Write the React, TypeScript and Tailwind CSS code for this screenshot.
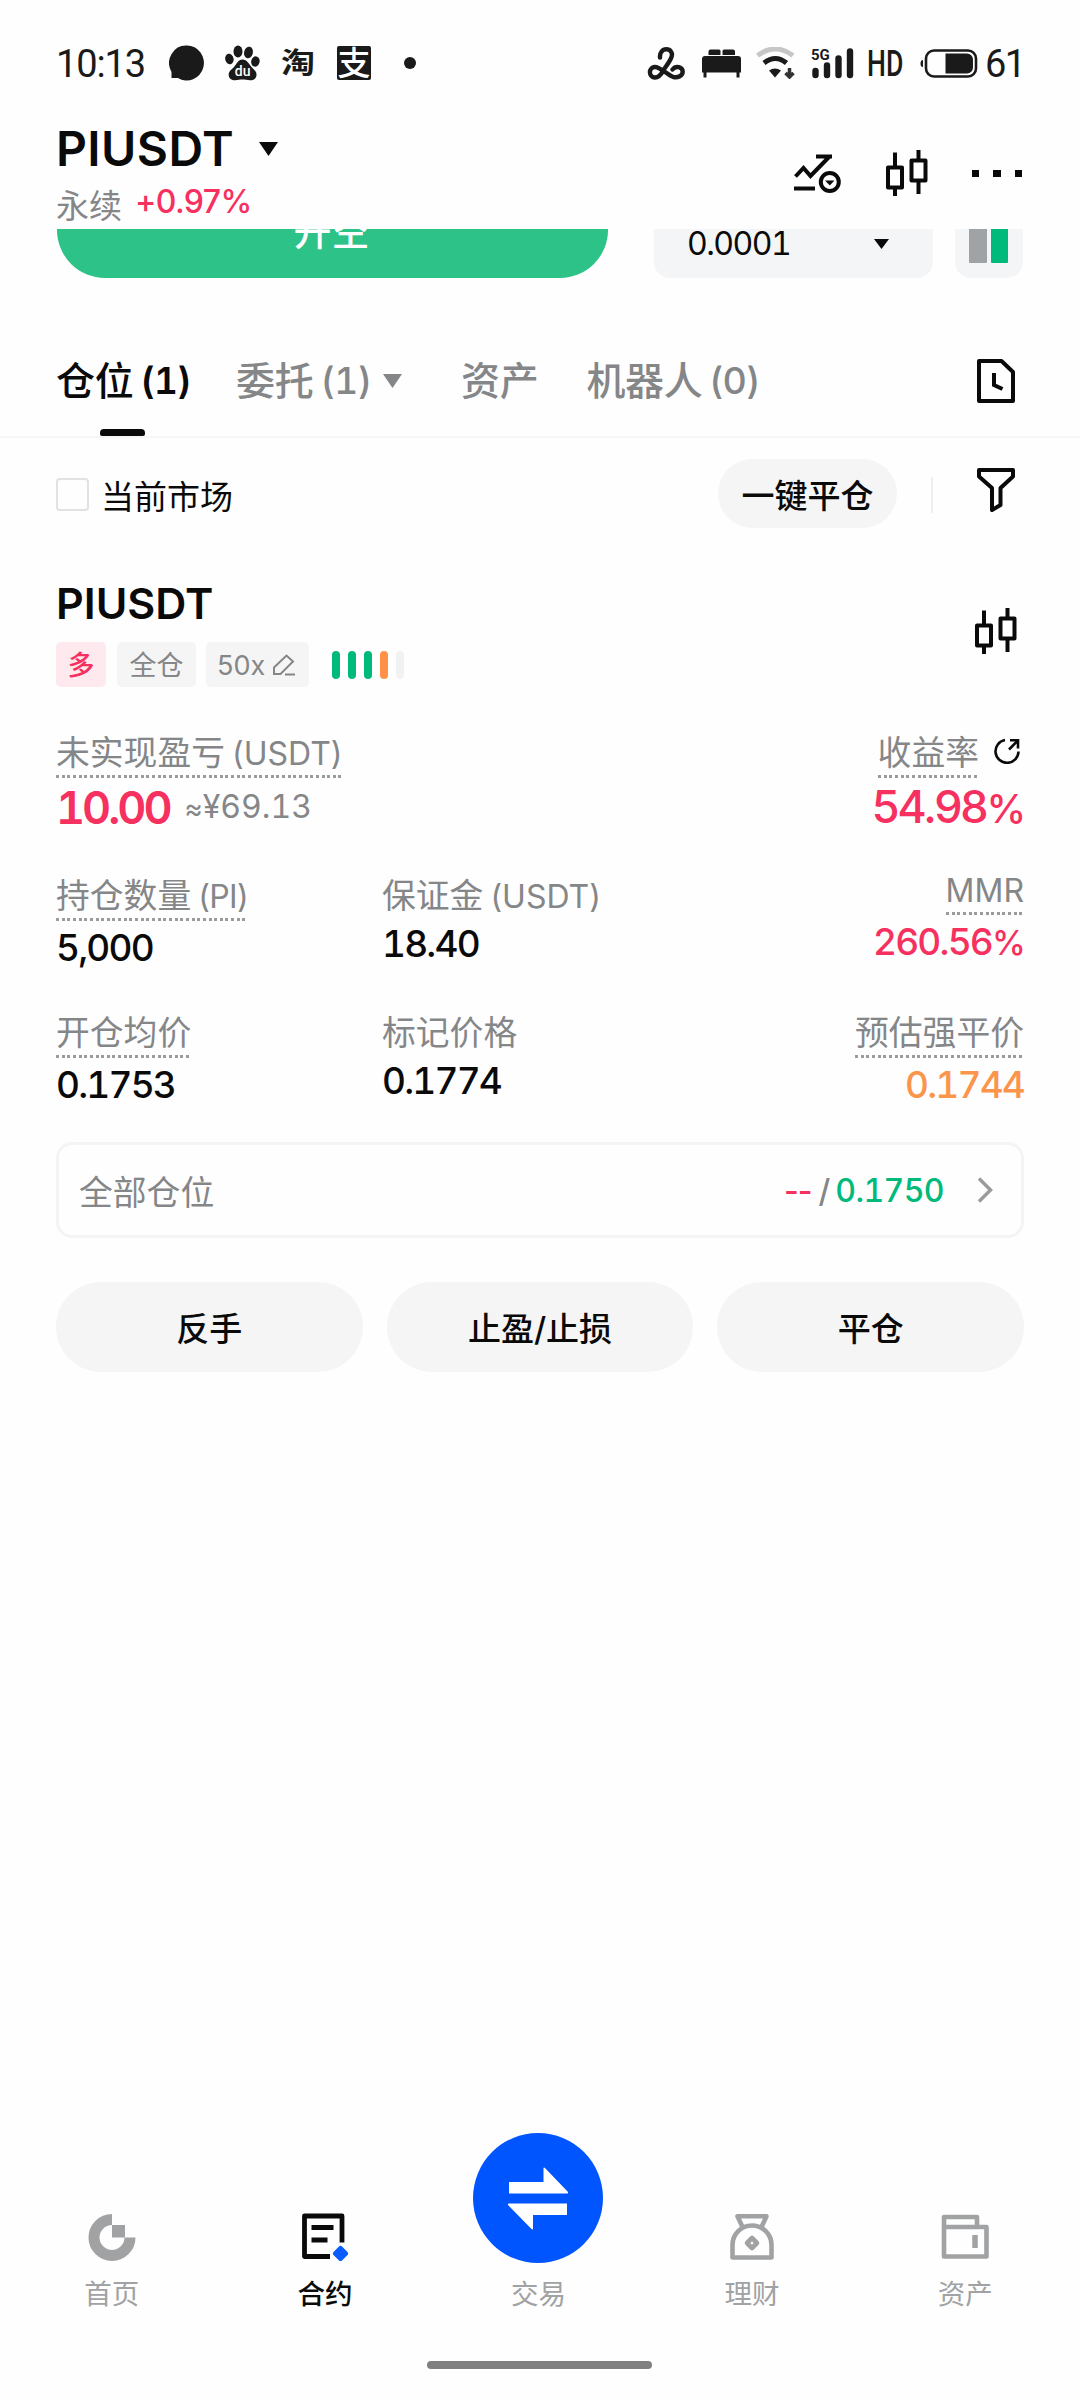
import type { ReactNode } from 'react';

function Caret({ className }: { className: string }) {
  return (
    <svg viewBox="0 0 19 14" preserveAspectRatio="none" className={className} fill="currentColor">
      <path d="M0 0H19L9.5 14Z" />
    </svg>
  );
}

function CandleIcon() {
  return (
    <svg width="42" height="46" viewBox="0 0 42 46" fill="none" stroke="#0a0a0a" strokeWidth="4" strokeLinejoin="round">
      <rect x="2" y="17.5" width="14" height="20" />
      <path d="M9 2.5V17M9 38v8" />
      <rect x="25.5" y="10.5" width="14" height="20" />
      <path d="M32.5 0V10M32.5 31v13" />
    </svg>
  );
}

function StatusBar() {
  return (
    <div className="flex h-[126px] items-center pl-[56px] pr-[58px] text-[#1a1a1a]">
      <span className="mt-[2px] w-[113px] font-[Roboto] text-[38px] leading-none tracking-[-1.1px]">10:13</span>
      <svg width="35" height="36" viewBox="0 0 35 36" fill="#1a1a1a">
        <path d="M18 0.5a17 17.5 0 1 1-9 32.4H2.5v-6A17 17.5 0 0 1 18 .5z" />
      </svg>
      <svg width="35" height="36" viewBox="0 0 35 36" fill="#1a1a1a" className="ml-[21px]">
        <ellipse cx="4.4" cy="14" rx="4.2" ry="5.4" transform="rotate(-12 4.4 14)" />
        <ellipse cx="13" cy="6.5" rx="4.5" ry="6" />
        <ellipse cx="23.5" cy="7.5" rx="4.4" ry="5.8" transform="rotate(14 23.5 7.5)" />
        <ellipse cx="30.4" cy="16.5" rx="4.2" ry="5.2" transform="rotate(12 30.4 16.5)" />
        <path d="M17.5 14.5c4.5 0 6.5 4.5 9 7.5 3 3.2 5.3 4.7 5 8.2-.4 4-3.5 5-6.5 5-3 0-5-.7-7.5-.7s-4.5.7-7.5.7c-3.5 0-6-1.5-6.3-5-.3-3.8 2.5-5.3 5.3-8.2 2.8-3 4-7.5 8.5-7.5z" />
        <text x="17.6" y="31" textAnchor="middle" fill="#fff" fontFamily="Roboto" fontSize="14" fontWeight="500">du</text>
      </svg>
      <span className="ml-[21px] w-[35px] text-[34px] font-bold leading-none [transform:scaleY(0.84)]">淘</span>
      <span className="ml-[21px] flex h-[34px] w-[34px] items-center justify-center rounded-[2px] bg-[#1a1a1a] text-[33px] font-medium leading-none text-white">支</span>
      <span className="ml-[33px] h-3 w-3 rounded-full bg-[#1a1a1a]" />

      <div className="ml-auto flex items-center">
        <svg width="38" height="33" viewBox="0 0 38 33" fill="none" stroke="#1a1a1a" strokeWidth="4.4" strokeLinecap="round">
          <path d="M13 10.5C12.5 5.5 15.5 2.3 19.3 2.3C23.5 2.3 26 6 24.5 10C23 14.5 19.5 18.5 16.5 23C14 28 11 30.7 7.5 30.5A5.3 5.3 0 0 1 7.5 20C13 19.5 20 27.5 26 29.8C31 31.3 35.7 28.5 35.7 24.8C35.7 20 29 18 25.5 22.5" />
        </svg>
        <svg width="39" height="29" viewBox="0 0 39 29" fill="#1a1a1a" className="ml-[17px]">
          <path d="M6.5 6V2.5A2 2 0 0 1 8.5.5H17A1.5 1.5 0 0 1 18.5 2V6zM20.5 6V2A1.5 1.5 0 0 1 22 .5H31A2 2 0 0 1 33 2.5V6z" />
          <path d="M3 7H36A3 3 0 0 1 39 10V23.5H0V10A3 3 0 0 1 3 7zM1.5 23h3v5.5h-3zM34.5 23h3v5.5h-3z" />
        </svg>
        <svg width="39" height="32" viewBox="0 0 39 32" fill="none" className="ml-[15px]">
          <path d="M1.5 8.5Q19.5-4.5 37 8.5" stroke="#c6c6c6" strokeWidth="5" />
          <path d="M8 16Q19.5 7 30.5 16" stroke="#1a1a1a" strokeWidth="5" />
          <path d="M13 23.5Q19 19.5 25 23.5L19 30.5Z" fill="#1a1a1a" />
          <path d="M33.5 21v9M29.5 26l4 4 4-4" stroke="#333" strokeWidth="3.5" />
        </svg>
        <svg width="41" height="31" viewBox="0 0 41 31" stroke="#1a1a1a" strokeWidth="6.4" strokeLinecap="round" className="ml-[17px] overflow-visible">
          <text x="-1" y="11.5" fontFamily="Roboto" fontSize="15" fontWeight="700" stroke="none" fill="#1a1a1a">5G</text>
          <path d="M3.5 23v4M15 17.5V27M26.5 10.5V27M38 3.5V27" />
        </svg>
        <span className="ml-[14px] mt-[2px] flex w-[37px] origin-left font-[Roboto] text-[36px] font-medium leading-none [transform:scaleX(0.74)]">HD</span>
        <svg width="58" height="29" viewBox="0 0 58 29" fill="none" className="ml-[16px]">
          <path d="M3 11Q.5 11 .5 14.5T3 18Z" fill="#1a1a1a" />
          <rect x="6" y="1.5" width="50" height="26" rx="8" stroke="#1a1a1a" strokeWidth="2.6" />
          <path d="M25.5 4.5H47a6 6 0 0 1 6 6v8a6 6 0 0 1-6 6H25.5z" fill="#1a1a1a" />
        </svg>
        <span className="ml-[7px] mt-[2px] w-[37px] font-[Roboto] text-[38px] leading-none tracking-[-1.5px]">61</span>
      </div>
    </div>
  );
}

function Header() {
  return (
    <div className="flex h-[103px] justify-between pl-[56px] pr-[58px]">
      <div>
        <div className="mt-[-3px] flex h-[52px] items-center">
          <span className="text-[48px] font-semibold leading-[52px] tracking-[0.4px]">PIUSDT</span>
          <Caret className="ml-[25px] h-[14px] w-[19px]" />
        </div>
        <div className="mt-[7px] flex h-[40px] items-center leading-[40px]">
          <span className="mt-[8px] text-[33px] text-[#858688]">永续</span>
          <span className="ml-[13px] text-[32px] font-medium tracking-[-0.6px] text-[#f6305f]">+0.97%</span>
        </div>
      </div>
      <div className="flex h-[94px] items-center">
        <svg width="47" height="39" viewBox="0 0 47 39" fill="none" stroke="#0a0a0a" strokeWidth="4">
          <path d="M1.5 22.5L9.5 14L16.5 22L35.5 2.5M22 2.5H38M0 34.5H21" />
          <circle cx="35.8" cy="28" r="9" />
          <path d="M31 26.5h9.5l-4.7 5z" fill="#0a0a0a" stroke="none" />
        </svg>
        <div className="ml-[45px]"><CandleIcon /></div>
        <div className="ml-[44px] flex gap-[14px]">
          <i className="h-[7px] w-[7.5px] bg-[#0a0a0a]" />
          <i className="h-[7px] w-[7.5px] bg-[#0a0a0a]" />
          <i className="h-[7px] w-[7.5px] bg-[#0a0a0a]" />
        </div>
      </div>
    </div>
  );
}

// order form scrolled under the header, only its lower part is visible
function OrderStrip() {
  return (
    <div className="flex h-[49px] items-end overflow-hidden pl-[57px] pr-[57px]">
      <div className="flex h-[96px] w-[551px] shrink-0 items-center justify-center rounded-full bg-[#2dc287] pr-[2px] pt-[2px] text-[38px] font-medium text-white">开空</div>
      <div className="ml-[46px] flex h-[69px] w-[279px] shrink-0 items-center justify-between rounded-[16px] bg-[#f4f5f7] pl-[33px] pr-[44px]">
        <span className="pt-[1px] text-[32px] leading-[24px] tabular-nums tracking-[-1.5px]">0.0001</span>
        <Caret className="h-[10px] w-[15px]" />
      </div>
      <div className="ml-[22px] flex h-[69px] w-[68px] shrink-0 justify-center gap-[4px] rounded-[16px] bg-[#f4f5f7] pr-[2px] pt-[15px]">
        <div className="h-[39px] w-[18px] rounded-b-[1px] bg-[#a0a3a5]" />
        <div className="h-[39px] w-[17px] rounded-b-[1px] bg-[#00ba7c]" />
      </div>
    </div>
  );
}

function Tabs() {
  return (
    <div className="flex h-[160px] border-b-2 border-[#f6f6f6] pl-[56px] pr-[65px] text-[39px] leading-[48px] text-[#858688]">
      <div className="flex w-[133px] flex-col items-center text-[#0a0a0a]">
        <div className="mt-[79px] flex w-full items-center whitespace-nowrap font-medium tracking-[-0.3px]">
          仓位<span className="ml-[7px] text-[37px] font-semibold tabular-nums tracking-[-0.8px]">(1)</span>
        </div>
        <div className="mt-auto h-[7px] w-[45px] rounded-t-[4px] rounded-b-[2px] bg-[#0a0a0a]" />
      </div>
      <div className="ml-[47px] mt-[79px] flex h-[48px] w-[166px] items-center whitespace-nowrap font-medium tracking-[-0.3px]">
        委托<span className="ml-[7px] text-[37px] tabular-nums tracking-[-0.6px]">(1)</span>
        <Caret className="ml-auto h-[14px] w-[19px]" />
      </div>
      <div className="ml-[59px] mt-[79px] font-medium tracking-[-0.3px]">资产</div>
      <div className="ml-[48px] mt-[79px] flex h-[48px] font-medium tracking-[-0.3px]">
        机器人<span className="ml-[7px] text-[37px]">(0)</span>
      </div>
      <svg width="38" height="44" viewBox="0 0 38 44" fill="none" stroke="#0a0a0a" strokeWidth="4" strokeLinejoin="round" className="ml-auto mt-[81px]">
        <path d="M2 2H24.5L36 13V42H2Z" />
        <path d="M17 14V26L25.5 30" strokeLinejoin="miter" />
      </svg>
    </div>
  );
}

function FilterRow() {
  return (
    <div className="flex h-[111px] items-center pl-[56px] pr-[65px]">
      <div className="mt-[2px] h-[33px] w-[33px] rounded-[4px] border-2 border-[#e2e2e2]" />
      <span className="ml-[12px] mt-[6px] text-[33px] leading-[40px]">当前市场</span>
      <button className="ml-auto h-[69px] w-[179px] rounded-full bg-[#f5f5f5] pt-[6px] text-[33px] font-medium">一键平仓</button>
      <div className="ml-[34px] mt-[2px] h-[36px] w-[2px] bg-[#efefef]" />
      <svg width="38" height="44" viewBox="0 0 38 44" fill="none" stroke="#0a0a0a" strokeWidth="4" strokeLinejoin="round" className="-mt-[7px] ml-[44px]">
        <path d="M2 2H36V8.5L23.5 20V37L15 42V20L2 8.5Z" />
      </svg>
    </div>
  );
}

function DottedLine() {
  return <div className="mt-[2px] h-[3px] w-full bg-[repeating-linear-gradient(90deg,#9a9b9c_0px,#9a9b9c_3px,transparent_3px,transparent_5.65px)]" />;
}

interface StatProps {
  label: ReactNode;
  value: ReactNode;
  dotted?: boolean;
  right?: boolean;
  valueClass?: string;
}

function Stat({ label, value, dotted, right, valueClass }: StatProps) {
  return (
    <div className={`flex flex-col ${right ? 'items-end' : 'items-start'}`}>
      <div className="text-[#858688]">
        <div className="h-[40px] whitespace-nowrap text-[33.8px] leading-[40px]">{label}</div>
        {dotted && <DottedLine />}
      </div>
      <div className={`h-[44px] text-[37px] font-medium leading-[44px] tabular-nums tracking-[-1.8px] ${dotted ? 'mt-[5px]' : 'mt-[6px]'} ${valueClass || ''}`}>{value}</div>
    </div>
  );
}

function Unit({ children }: { children: ReactNode }) {
  return <span className="ml-[7px] text-[32px]">{children}</span>;
}

function PositionCard() {
  return (
    <div className="mt-[28px] px-[56px]">
      <div className="flex h-[110px] justify-between">
        <div>
          <div className="h-[52px] text-[43px] font-semibold leading-[52px]">PIUSDT</div>
          <div className="mt-[13px] flex items-center text-[27px] leading-[45px] text-[#858688]">
            <span className="h-[45px] w-[50px] rounded-[5px] bg-[#fee9ee] pt-[1px] text-center font-medium text-[#f6305f]">多</span>
            <span className="ml-[11px] h-[45px] w-[79px] rounded-[5px] bg-[#f5f5f5] pt-[1px] text-center">全仓</span>
            <span className="ml-[10px] flex h-[45px] w-[103px] items-center rounded-[5px] bg-[#f5f5f5] pl-[11px] pt-[1px]">
              50x
              <svg width="22" height="22" viewBox="0 0 22 22" fill="none" stroke="#858688" strokeWidth="2" className="ml-[8px]">
                <path d="M1 20V13.5L13.5 1.5L20 7.5L7.5 20ZM12 20.5H22" />
              </svg>
            </span>
            <div className="ml-[23px] flex gap-[8px]">
              <i className="h-[28px] w-[8px] rounded-full bg-[#00ba7c]" />
              <i className="h-[28px] w-[8px] rounded-full bg-[#00ba7c]" />
              <i className="h-[28px] w-[8px] rounded-full bg-[#00ba7c]" />
              <i className="h-[28px] w-[8px] rounded-full bg-[#ff9147]" />
              <i className="h-[28px] w-[8px] rounded-full bg-[#f2f2f2]" />
            </div>
          </div>
        </div>
        <div className="mr-[7px] mt-[31px]"><CandleIcon /></div>
      </div>

      <div className="mt-[46px] flex h-[97px] justify-between text-[#858688]">
        <div>
          <div className="w-fit">
            <div className="h-[40px] text-[33.8px] leading-[40px]">
              未实现盈亏<Unit>(USDT)</Unit>
            </div>
            <DottedLine />
          </div>
          <div className="mt-[5px] flex items-center leading-[48px] tabular-nums">
            <span className="text-[45px] font-semibold tracking-[-3px] text-[#f6305f]">10.00</span>
            <span className="ml-[15px] text-[32px]"><span className="text-[28px]">≈</span>¥69.13</span>
          </div>
        </div>
        <div className="flex flex-col items-end">
          <div className="flex">
            <div>
              <div className="h-[40px] text-[33.8px] leading-[40px]">收益率</div>
              <DottedLine />
            </div>
            <svg width="26" height="26" viewBox="0 0 26 26" fill="none" stroke="#0a0a0a" strokeWidth="2.6" className="ml-[15px] mr-[4px] mt-[5px]">
              <path d="M11 2A11.5 11.5 0 1 0 24.5 13.5M16 2.3H24V10.5M23.5 2.8L15 11.5" />
            </svg>
          </div>
          <div className="mt-[5px] text-[45px] font-medium leading-[48px] tracking-[-2.2px] text-[#f6305f]">
            54.98<span className="text-[40px]">%</span>
          </div>
        </div>
      </div>

      <div className="mt-[46px] grid h-[94px] grid-cols-[326px_1fr_auto]">
        <Stat label={<>持仓数量<Unit><span className="tracking-[-0.6px]">(PI)</span></Unit></>} value="5,000" dotted />
        <Stat label={<>保证金<Unit>(USDT)</Unit></>} value="18.40" />
        <div className="-mt-1.5">
          <Stat label={<span className="text-[32px]">MMR</span>} value={<>260.56<span className="text-[34px]">%</span></>} dotted right valueClass="text-[#f6305f]" />
        </div>
      </div>
      <div className="mt-[43px] grid h-[94px] grid-cols-[326px_1fr_auto]">
        <Stat label="开仓均价" value="0.1753" dotted />
        <Stat label="标记价格" value="0.1774" />
        <Stat label="预估强平价" value="0.1744" dotted right valueClass="text-[#fb954c]" />
      </div>

      <div className="mt-[35px] flex h-[96px] items-center rounded-[16px] border-[3px] border-[#f4f4f4] pl-[20px] pr-[28px]">
        <span className="mt-[6px] text-[33.8px] leading-[40px] text-[#858688]">全部仓位</span>
        <div className="ml-auto mt-[2px] flex items-center text-[32px] font-medium leading-[40px] text-[#858688]">
          <span className="tracking-[-1px] text-[#f6305f]">--</span>
          <span className="ml-[7px] mr-[5px]">/</span>
          <span className="tabular-nums tracking-[-0.6px] text-[#00ba7c]">0.1750</span>
        </div>
        <svg width="16" height="26" viewBox="0 0 16 26" fill="none" stroke="#9a9b9c" strokeWidth="3.5" className="ml-[33px]">
          <path d="M2 1.5L13.5 13L2 24.5" />
        </svg>
      </div>

      <div className="mt-[44px] grid grid-cols-3 gap-[24px]">
        {['反手', '止盈/止损', '平仓'].map((t) => (
          <button key={t} className="h-[90px] rounded-full bg-[#f5f5f5] pt-[6px] text-[33px] font-medium">{t}</button>
        ))}
      </div>
    </div>
  );
}

function NavItem({ label, active, children }: { label: string; active?: boolean; children: ReactNode }) {
  return (
    <div className={`flex flex-col items-center justify-end ${active ? 'font-medium text-[#0a0a0a]' : 'text-[#a0a2a4]'}`}>
      {children}
      <span className="mt-[13px] text-[27.5px] leading-[40px]">{label}</span>
    </div>
  );
}

function BottomNav() {
  return (
    <div className="ml-[5px] grid h-[182px] w-[1067px] grid-cols-5">
      <NavItem label="首页">
        <svg width="48" height="48" viewBox="0 0 48 48" fill="none">
          <path d="M24 6.5A18 18 0 1 0 42 24.5" stroke="#a0a2a4" strokeWidth="11" />
          <path d="M24 12H37V24.5H24z" fill="#a0a2a4" />
        </svg>
      </NavItem>
      <NavItem label="合约" active>
        <svg width="48" height="48" viewBox="0 0 48 48" fill="none">
          <path d="M41 29.5V3H3.5V43.5H29M10.5 14.5H32.5M10.5 27H26.5" stroke="#0a0a0a" strokeWidth="4.8" strokeLinejoin="round" />
          <path d="M39.5 35.5L44.5 40.5L39.5 45.5L34.5 40.5Z" fill="#0a5cff" stroke="#0a5cff" strokeWidth="5" strokeLinejoin="round" />
        </svg>
      </NavItem>
      <NavItem label="交易">
        <div className="-mb-[2px] flex h-[130px] w-[130px] items-center justify-center rounded-full bg-[#0055ff]">
          <svg width="62" height="63" viewBox="0 0 62 63" fill="#fff">
            <path d="M2 15H36.5V1.5Q36.5 0 38 1L61 25Q61.5 26.5 60 26.5H2z" />
            <path d="M60 48H26V61.5Q26 63 24.5 62L1 38Q.5 36.5 2 36.5H60z" />
          </svg>
        </div>
      </NavItem>
      <NavItem label="理财">
        <svg width="48" height="48" viewBox="0 0 48 48" fill="none" stroke="#a0a2a4" strokeWidth="4.6" strokeLinejoin="round">
          <path d="M14.5 14L9.5 3.3H38.5L33.5 14" />
          <path d="M4.5 44.5V32A19.5 19.5 0 0 1 43.5 32V44.5Z" />
          <path d="M24 25L29 30L24 35L19 30Z" />
        </svg>
      </NavItem>
      <NavItem label="资产">
        <svg width="48" height="48" viewBox="0 0 48 48" fill="none" stroke="#a0a2a4" strokeWidth="4.6" strokeLinejoin="round">
          <path d="M3 14V4H36V14M3 14H45.5V43.5H3Z" />
          <path d="M34 22V35" strokeWidth="5.5" />
        </svg>
      </NavItem>
    </div>
  );
}

export default function App() {
  return (
    <div className="flex h-[2400px] w-[1080px] flex-col overflow-hidden bg-[#fefefe] font-['Inter','Noto_Sans_CJK_SC',sans-serif] text-[#0a0a0a]">
      <StatusBar />
      <Header />
      <OrderStrip />
      <Tabs />
      <FilterRow />
      <PositionCard />
      <div className="mt-auto">
        <BottomNav />
        <div className="mb-[31px] ml-[427px] mt-[47px] h-[8px] w-[225px] rounded-full bg-[#808080]" />
      </div>
    </div>
  );
}
